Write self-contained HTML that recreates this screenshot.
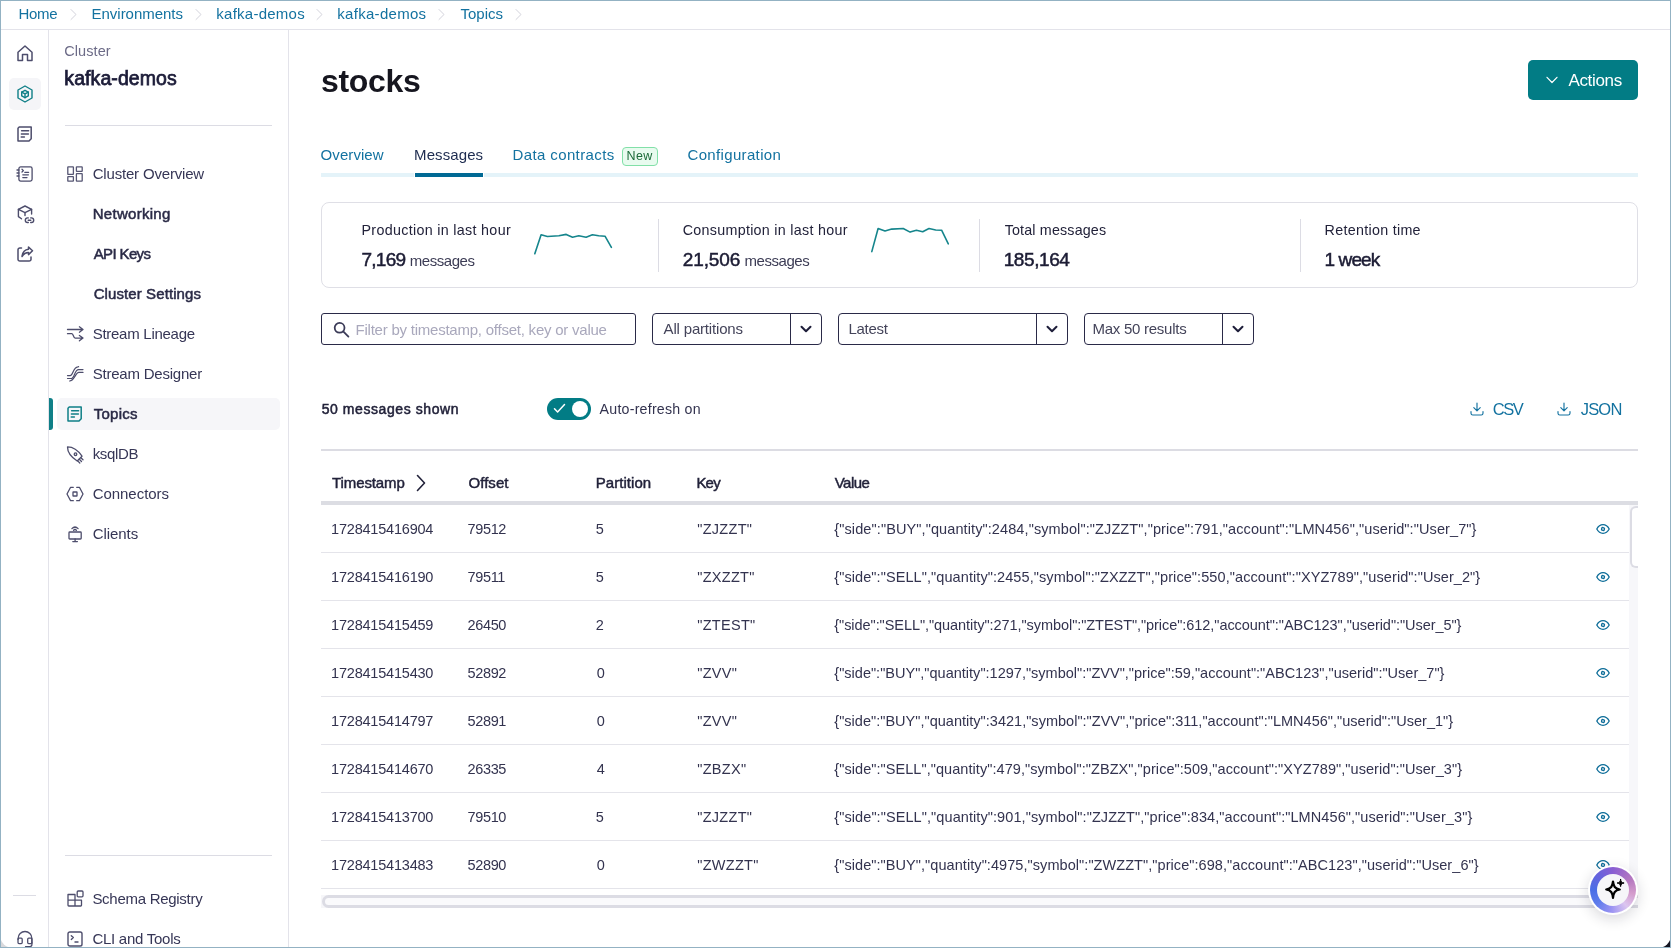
<!DOCTYPE html>
<html><head><meta charset="utf-8">
<style>
html,body{margin:0;padding:0;background:#fff;}
body{width:1671px;height:948px;position:relative;overflow:hidden;font-family:"Liberation Sans",sans-serif;}
.t{position:absolute;white-space:pre;font-family:"Liberation Sans",sans-serif;}
#txt{position:absolute;left:0;top:0;width:1671px;height:948px;will-change:transform;}
.a{position:absolute;}
svg.i{position:absolute;overflow:visible;fill:none;stroke-linecap:round;stroke-linejoin:round;}
.frame{position:absolute;left:0;top:0;width:1671px;height:948px;box-sizing:border-box;border:1px solid #93b2c3;z-index:50;pointer-events:none;}
</style></head>
<body>
<!-- corners outside -->
<div class="a" style="left:1650px;top:927px;width:21px;height:21px;background:#141421;"></div>
<div class="a" style="left:0;top:927px;width:21px;height:21px;background:#d9d9dc;"></div>
<div class="a" style="left:0;top:0;width:1671px;height:948px;background:#fff;border-radius:0 0 13px 13px;"></div>

<!-- breadcrumb bar bottom border -->
<div class="a" style="left:0;top:29px;width:1671px;height:1px;background:#e3e3ea;"></div>
<!-- rail border -->
<div class="a" style="left:48px;top:30px;width:1px;height:918px;background:#e3e3ea;"></div>
<!-- sidebar border -->
<div class="a" style="left:288px;top:30px;width:1px;height:918px;background:#e3e3ea;"></div>

<!-- breadcrumb chevrons -->
<svg class="i" style="left:69px;top:8px" width="10" height="13" viewBox="0 0 10 13"><path d="M2 1.5 L7 6.5 L2 11.5" stroke="#d3d3dc" stroke-width="1"/></svg>
<svg class="i" style="left:194px;top:8px" width="10" height="13" viewBox="0 0 10 13"><path d="M2 1.5 L7 6.5 L2 11.5" stroke="#d3d3dc" stroke-width="1"/></svg>
<svg class="i" style="left:315px;top:8px" width="10" height="13" viewBox="0 0 10 13"><path d="M2 1.5 L7 6.5 L2 11.5" stroke="#d3d3dc" stroke-width="1"/></svg>
<svg class="i" style="left:437px;top:8px" width="10" height="13" viewBox="0 0 10 13"><path d="M2 1.5 L7 6.5 L2 11.5" stroke="#d3d3dc" stroke-width="1"/></svg>
<svg class="i" style="left:514px;top:8px" width="10" height="13" viewBox="0 0 10 13"><path d="M2 1.5 L7 6.5 L2 11.5" stroke="#d3d3dc" stroke-width="1"/></svg>

<!-- ===== icon rail ===== -->
<!-- home -->
<svg class="i" style="left:17px;top:45px" width="16" height="17" viewBox="0 0 16 17" stroke="#4d4d6c" stroke-width="1.5">
<path d="M1 7.2 L8 1 L15 7.2 V15.5 H10.5 V9.6 H5.5 V15.5 H1 Z"/></svg>
<!-- active cluster box -->
<div class="a" style="left:9px;top:78px;width:32px;height:32px;border-radius:5px;background:#f5f5f8;"></div>
<svg class="i" style="left:16px;top:85px" width="18" height="18" viewBox="0 0 18 18" stroke="#0f7f87" stroke-width="1.4">
<path d="M9 1 L16 5 V13 L9 17 L2 13 V5 Z"/>
<path d="M9 5.3 L12.3 7.1 V10.9 L9 12.7 L5.7 10.9 V7.1 Z"/>
<path d="M5.7 7.1 L9 8.9 L12.3 7.1 M9 8.9 V12.7"/></svg>
<!-- doc -->
<svg class="i" style="left:17px;top:126px" width="16" height="16" viewBox="0 0 16 16" stroke="#4d4d6c" stroke-width="1.5">
<path d="M2.2 1 H14.2 V12.8 L12 15 H1 V2.2 Z"/>
<path d="M4.6 4.8 H11.6 M4.4 8 H11.4 M4.2 11 H7.4"/></svg>
<!-- notebook -->
<svg class="i" style="left:16px;top:166px" width="17" height="16" viewBox="0 0 17 16" stroke="#4d4d6c" stroke-width="1.3">
<rect x="2.9" y="0.9" width="13.2" height="14.2" rx="1.8"/>
<path d="M1 4 H2.9 M1 7 H2.9 M1 10 H2.9"/>
<path d="M6 3.2 L7.4 4.6 L6 6 M8.8 6.3 H12.6 M6.8 8.8 H12.4 M6.8 11.6 H11"/></svg>
<!-- cube link -->
<svg class="i" style="left:17px;top:205px" width="18" height="18" viewBox="0 0 18 18" stroke="#4d4d6c" stroke-width="1.4">
<path d="M8 1 L14.6 4.3 L8 7.6 L1.4 4.3 Z"/>
<path d="M1.4 4.3 V11.6 L4.5 13.8 M14.6 4.3 V9 M8 7.6 V10.6"/>
<path d="M11.3 12.9 H10.6 A2.3 2.3 0 0 0 10.6 17.5 H11.3 M13.7 12.9 H14.4 A2.3 2.3 0 0 1 14.4 17.5 H13.7 M11.2 15.2 H13.8"/></svg>
<!-- share -->
<svg class="i" style="left:17px;top:246px" width="17" height="16" viewBox="0 0 17 16" stroke="#4d4d6c" stroke-width="1.5">
<path d="M4.5 2 H2.8 A1.8 1.8 0 0 0 1 3.8 V13.2 A1.8 1.8 0 0 0 2.8 15 H12.2 A1.8 1.8 0 0 0 14 13.2 V11"/>
<path d="M11.5 1 L15.5 4.8 L11.5 8.6 V6.6 C8.5 6.6 6.5 8 5 10.5 C5.5 6.5 8 3.5 11.5 3.2 Z"/></svg>
<!-- rail bottom divider -->
<div class="a" style="left:13px;top:895px;width:23px;height:1px;background:#dcdce4;"></div>
<!-- headset -->
<svg class="i" style="left:17px;top:931px" width="16" height="18" viewBox="0 0 16 18" stroke="#4d4d6c" stroke-width="1.3">
<path d="M1.1 8.5 V7.4 A6.9 6.9 0 0 1 14.9 7.4 V12"/>
<rect x="1" y="7.2" width="4.2" height="5.4" rx="1"/>
<rect x="10.7" y="7.2" width="4.2" height="5.4" rx="1"/>
<path d="M14.9 12 V13.6 A2 2 0 0 1 12.9 15.6 H8.5"/></svg>
<!-- ===== sidebar ===== -->
<div class="a" style="left:65px;top:125px;width:207px;height:1px;background:#dcdce4;"></div>
<div class="a" style="left:65px;top:855px;width:207px;height:1px;background:#dcdce4;"></div>
<!-- topics active -->
<div class="a" style="left:57px;top:398px;width:223px;height:32px;border-radius:5px;background:#f6f6f9;"></div>
<div class="a" style="left:49px;top:398px;width:4px;height:32px;border-radius:0 3px 3px 0;background:#0f7f87;"></div>

<!-- cluster overview grid -->
<svg class="i" style="left:67px;top:166px" width="16" height="16" viewBox="0 0 16 16" stroke="#565673" stroke-width="1.3">
<rect x="0.8" y="0.8" width="5.6" height="7.6" rx="0.4"/>
<rect x="9.4" y="0.8" width="5.8" height="4.6" rx="0.4"/>
<rect x="0.8" y="10.6" width="5.6" height="4.6" rx="0.4"/>
<rect x="9.4" y="7.6" width="5.8" height="7.6" rx="0.4"/></svg>
<!-- stream lineage -->
<svg class="i" style="left:67px;top:326px" width="17" height="16" viewBox="0 0 17 16" stroke="#4d4d6c" stroke-width="1.3">
<path d="M0.5 3.5 H15.8 M12.4 0.8 L16 3.5 L12.4 6.2"/>
<path d="M0.5 7.7 H4.8 C6.6 7.7 6.2 12.1 8.2 12.1 H15.8 M12.4 9.4 L16 12.1 L12.4 14.8"/></svg>
<!-- stream designer -->
<svg class="i" style="left:67px;top:366px" width="17" height="16" viewBox="0 0 17 16" stroke="#4d4d6c" stroke-width="1.2">
<path d="M0.5 9.6 H3.2 C6.2 9.6 6 1.2 10.8 0.8 L11.6 0.7"/>
<path d="M0.5 12.5 H4.2 C7.6 12.5 7.4 3.6 11.6 3.6 H16"/>
<path d="M2.6 15 C7.2 15 8.6 6.4 11.8 6.4 H16"/></svg>
<!-- topics teal doc -->
<svg class="i" style="left:67px;top:406px" width="16" height="16" viewBox="0 0 16 16" stroke="#0f7f87" stroke-width="1.5">
<path d="M2.2 1 H14.2 V12.8 L12 15 H1 V2.2 Z"/>
<path d="M4.6 4.8 H11.6 M4.4 8 H11.4 M4.2 11 H7.4"/></svg>
<!-- ksqlDB rocket -->
<svg class="i" style="left:66px;top:446px" width="18" height="17" viewBox="0 0 18 17" stroke="#4d4d6c" stroke-width="1.3">
<path d="M1.5 0.9 C6.5 0.9 11.5 3.5 16 10.2 L11.2 15 C4.5 10.5 1.5 6 1.5 0.9 Z"/>
<circle cx="9.5" cy="8.2" r="1.3"/>
<path d="M13.3 13.3 L15.5 15.5 M14.9 11.7 L17 13.8 M11.7 14.9 L13.8 17"/></svg>
<!-- connectors -->
<svg class="i" style="left:66px;top:486px" width="18" height="16" viewBox="0 0 18 16" stroke="#4d4d6c" stroke-width="1.3" stroke-linejoin="miter">
<path d="M7.3 1.3 H4.6 L1 8 L4.6 14.7 H7.3 M10.7 1.3 H13.4 L17 8 L13.4 14.7 H10.7"/>
<rect x="7" y="6" width="4" height="4" rx="0.3"/></svg>
<!-- clients -->
<svg class="i" style="left:67px;top:526px" width="16" height="17" viewBox="0 0 16 17" stroke="#4d4d6c" stroke-width="1.3">
<path d="M4.9 2.6 C6.7 0.8 9.3 0.8 11.1 2.6 M6.6 4.2 C7.4 3.4 8.6 3.4 9.4 4.2"/>
<rect x="2" y="6" width="12.2" height="7" rx="0.8"/>
<path d="M8.1 13 V15.4 M5.8 15.6 H10.4"/></svg>
<!-- schema registry -->
<svg class="i" style="left:67px;top:890px" width="17" height="17" viewBox="0 0 17 17" stroke="#4d4d6c" stroke-width="1.3">
<path d="M1 4.5 H8 V16 H1.8 A0.8 0.8 0 0 1 1 15.2 Z M1 10.2 H14.5 V15.2 A0.8 0.8 0 0 1 13.7 16 H8"/>
<rect x="10.2" y="1" width="5.8" height="5.8" rx="1"/></svg>
<!-- CLI -->
<svg class="i" style="left:67px;top:931px" width="16" height="16" viewBox="0 0 16 16" stroke="#4d4d6c" stroke-width="1.4">
<rect x="1" y="1" width="14" height="14" rx="1.8"/>
<path d="M4.3 4.8 L6.3 6.6 L4.3 8.4 M8 11 H11"/></svg>

<!-- ===== main header ===== -->
<div class="a" style="left:1528px;top:60px;width:110px;height:40px;border-radius:5px;background:#027c85;"></div>
<svg class="i" style="left:1546px;top:76px" width="12" height="8" viewBox="0 0 12 8" stroke="#ffffff" stroke-width="1.2"><path d="M1 1.3 L6 6.5 L11 1.3"/></svg>

<!-- tabs -->
<div class="a" style="left:321px;top:173px;width:1317px;height:4px;background:#e4f3f9;"></div>
<div class="a" style="left:414px;top:173px;width:70px;height:4px;background:#fff;"></div>
<div class="a" style="left:415px;top:173px;width:68px;height:4px;background:#006994;"></div>
<div class="a" style="left:622px;top:147px;width:34px;height:17px;border:1px solid #82e0a8;border-radius:4px;background:#e8fbef;"></div>

<!-- stats card -->
<div class="a" style="left:321px;top:202px;width:1315px;height:84px;border:1px solid #dfdfe6;border-radius:8px;"></div>
<div class="a" style="left:658px;top:219px;width:1px;height:53px;background:#dcdce4;"></div>
<div class="a" style="left:979px;top:219px;width:1px;height:53px;background:#dcdce4;"></div>
<div class="a" style="left:1300px;top:219px;width:1px;height:53px;background:#dcdce4;"></div>
<svg class="i" style="left:0;top:0" width="1671" height="300" viewBox="0 0 1671 300" stroke="#15858c" stroke-width="1.6" stroke-linejoin="miter" stroke-linecap="butt">
<polyline points="534.8,253.7 541.1,234.8 547.4,236.5 558.9,235.8 566.2,234.4 572.5,237.3 578.8,235.8 586.1,237.3 592.4,234.8 598.7,235.8 605,236.2 611.4,247.4"/>
<polyline points="871.8,251.6 878.1,228.5 885,231 891.7,229.1 903.2,228.5 910.1,232.1 916.4,230.2 922.7,231.7 929,228.5 935.7,230 941.6,230.2 948.3,243.8"/>
</svg>

<!-- filters -->
<div class="a" style="left:321px;top:313px;width:313px;height:30px;border:1px solid #2a2a48;border-radius:3px;"></div>
<svg class="i" style="left:333px;top:321px" width="17" height="17" viewBox="0 0 17 17" stroke="#3b3b58" stroke-width="1.8">
<circle cx="6.6" cy="6.8" r="4.9"/><path d="M10.2 10.4 L15.4 15.6"/></svg>
<div class="a" style="left:652px;top:313px;width:168px;height:30px;border:1px solid #2a2a48;border-radius:4px;"></div>
<div class="a" style="left:790px;top:314px;width:1px;height:30px;background:#2a2a48;"></div>
<div class="a" style="left:838px;top:313px;width:228px;height:30px;border:1px solid #2a2a48;border-radius:4px;"></div>
<div class="a" style="left:1036px;top:314px;width:1px;height:30px;background:#2a2a48;"></div>
<div class="a" style="left:1084px;top:313px;width:168px;height:30px;border:1px solid #2a2a48;border-radius:4px;"></div>
<div class="a" style="left:1222px;top:314px;width:1px;height:30px;background:#2a2a48;"></div>
<svg class="i" style="left:800px;top:325px" width="12" height="9" viewBox="0 0 12 9" stroke="#1e1e3a" stroke-width="2"><path d="M1.5 1.8 L6 6.3 L10.5 1.8"/></svg>
<svg class="i" style="left:1046px;top:325px" width="12" height="9" viewBox="0 0 12 9" stroke="#1e1e3a" stroke-width="2"><path d="M1.5 1.8 L6 6.3 L10.5 1.8"/></svg>
<svg class="i" style="left:1232px;top:325px" width="12" height="9" viewBox="0 0 12 9" stroke="#1e1e3a" stroke-width="2"><path d="M1.5 1.8 L6 6.3 L10.5 1.8"/></svg>

<!-- toggle -->
<div class="a" style="left:547px;top:398px;width:44px;height:22px;border-radius:11px;background:#027c85;"></div>
<div class="a" style="left:572px;top:401px;width:16px;height:16px;border-radius:8px;background:#fff;"></div>
<svg class="i" style="left:553px;top:403px" width="13" height="11" viewBox="0 0 13 11" stroke="#ffffff" stroke-width="1.5"><path d="M1.5 5.8 L4.6 9 L11.5 1.5"/></svg>

<!-- download icons -->
<svg class="i" style="left:1470px;top:402px" width="14" height="14" viewBox="0 0 14 14" stroke="#1372a0" stroke-width="1.15">
<path d="M7 1 V8.6 M3.8 5.6 L7 8.8 L10.2 5.6 M1 9.5 V11.2 A1.8 1.8 0 0 0 2.8 13 H11.2 A1.8 1.8 0 0 0 13 11.2 V9.5"/></svg>
<svg class="i" style="left:1557px;top:402px" width="14" height="14" viewBox="0 0 14 14" stroke="#1372a0" stroke-width="1.15">
<path d="M7 1 V8.6 M3.8 5.6 L7 8.8 L10.2 5.6 M1 9.5 V11.2 A1.8 1.8 0 0 0 2.8 13 H11.2 A1.8 1.8 0 0 0 13 11.2 V9.5"/></svg>

<!-- table -->
<div class="a" style="left:321px;top:449px;width:1317px;height:2px;background:#dcdce3;"></div>
<svg class="i" style="left:415px;top:474px" width="12" height="18" viewBox="0 0 12 18" stroke="#22223a" stroke-width="1.6"><path d="M2.5 1.5 L9.5 9 L2.5 16.5"/></svg>
<div class="a" style="left:321px;top:501px;width:1317px;height:4px;background:#dcdde3;"></div>
<!-- vertical scrollbar track -->
<div class="a" style="left:1629px;top:505px;width:9px;height:384px;background:#f7f7fa;"></div>
<div class="a" style="left:1630px;top:506px;width:8px;height:62px;box-sizing:border-box;border:2px solid #dcdce4;border-right:none;border-radius:6px 0 0 6px;background:#fff;"></div>
<div class="a" style="left:321px;top:552px;width:1308px;height:1px;background:#e4e4ea;"></div>
<svg class="i" style="left:1596px;top:524px" width="14" height="10" viewBox="0 0 14 10" stroke="#0c6c98" stroke-width="1.3"><path d="M0.8 5 C2.6 1.6 4.8 0.7 7 0.7 C9.2 0.7 11.4 1.6 13.2 5 C11.4 8.4 9.2 9.3 7 9.3 C4.8 9.3 2.6 8.4 0.8 5 Z"/><rect x="5.6" y="3.6" width="2.8" height="2.8" rx="0.9" transform="rotate(15 7 5)"/></svg>
<div class="a" style="left:321px;top:600px;width:1308px;height:1px;background:#e4e4ea;"></div>
<svg class="i" style="left:1596px;top:572px" width="14" height="10" viewBox="0 0 14 10" stroke="#0c6c98" stroke-width="1.3"><path d="M0.8 5 C2.6 1.6 4.8 0.7 7 0.7 C9.2 0.7 11.4 1.6 13.2 5 C11.4 8.4 9.2 9.3 7 9.3 C4.8 9.3 2.6 8.4 0.8 5 Z"/><rect x="5.6" y="3.6" width="2.8" height="2.8" rx="0.9" transform="rotate(15 7 5)"/></svg>
<div class="a" style="left:321px;top:648px;width:1308px;height:1px;background:#e4e4ea;"></div>
<svg class="i" style="left:1596px;top:620px" width="14" height="10" viewBox="0 0 14 10" stroke="#0c6c98" stroke-width="1.3"><path d="M0.8 5 C2.6 1.6 4.8 0.7 7 0.7 C9.2 0.7 11.4 1.6 13.2 5 C11.4 8.4 9.2 9.3 7 9.3 C4.8 9.3 2.6 8.4 0.8 5 Z"/><rect x="5.6" y="3.6" width="2.8" height="2.8" rx="0.9" transform="rotate(15 7 5)"/></svg>
<div class="a" style="left:321px;top:696px;width:1308px;height:1px;background:#e4e4ea;"></div>
<svg class="i" style="left:1596px;top:668px" width="14" height="10" viewBox="0 0 14 10" stroke="#0c6c98" stroke-width="1.3"><path d="M0.8 5 C2.6 1.6 4.8 0.7 7 0.7 C9.2 0.7 11.4 1.6 13.2 5 C11.4 8.4 9.2 9.3 7 9.3 C4.8 9.3 2.6 8.4 0.8 5 Z"/><rect x="5.6" y="3.6" width="2.8" height="2.8" rx="0.9" transform="rotate(15 7 5)"/></svg>
<div class="a" style="left:321px;top:744px;width:1308px;height:1px;background:#e4e4ea;"></div>
<svg class="i" style="left:1596px;top:716px" width="14" height="10" viewBox="0 0 14 10" stroke="#0c6c98" stroke-width="1.3"><path d="M0.8 5 C2.6 1.6 4.8 0.7 7 0.7 C9.2 0.7 11.4 1.6 13.2 5 C11.4 8.4 9.2 9.3 7 9.3 C4.8 9.3 2.6 8.4 0.8 5 Z"/><rect x="5.6" y="3.6" width="2.8" height="2.8" rx="0.9" transform="rotate(15 7 5)"/></svg>
<div class="a" style="left:321px;top:792px;width:1308px;height:1px;background:#e4e4ea;"></div>
<svg class="i" style="left:1596px;top:764px" width="14" height="10" viewBox="0 0 14 10" stroke="#0c6c98" stroke-width="1.3"><path d="M0.8 5 C2.6 1.6 4.8 0.7 7 0.7 C9.2 0.7 11.4 1.6 13.2 5 C11.4 8.4 9.2 9.3 7 9.3 C4.8 9.3 2.6 8.4 0.8 5 Z"/><rect x="5.6" y="3.6" width="2.8" height="2.8" rx="0.9" transform="rotate(15 7 5)"/></svg>
<div class="a" style="left:321px;top:840px;width:1308px;height:1px;background:#e4e4ea;"></div>
<svg class="i" style="left:1596px;top:812px" width="14" height="10" viewBox="0 0 14 10" stroke="#0c6c98" stroke-width="1.3"><path d="M0.8 5 C2.6 1.6 4.8 0.7 7 0.7 C9.2 0.7 11.4 1.6 13.2 5 C11.4 8.4 9.2 9.3 7 9.3 C4.8 9.3 2.6 8.4 0.8 5 Z"/><rect x="5.6" y="3.6" width="2.8" height="2.8" rx="0.9" transform="rotate(15 7 5)"/></svg>
<div class="a" style="left:321px;top:888px;width:1308px;height:1px;background:#e4e4ea;"></div>
<svg class="i" style="left:1596px;top:860px" width="14" height="10" viewBox="0 0 14 10" stroke="#0c6c98" stroke-width="1.3"><path d="M0.8 5 C2.6 1.6 4.8 0.7 7 0.7 C9.2 0.7 11.4 1.6 13.2 5 C11.4 8.4 9.2 9.3 7 9.3 C4.8 9.3 2.6 8.4 0.8 5 Z"/><rect x="5.6" y="3.6" width="2.8" height="2.8" rx="0.9" transform="rotate(15 7 5)"/></svg>

<!-- horizontal scrollbar -->
<div class="a" style="left:321px;top:895px;width:1317px;height:13px;background:#f6f6f9;"></div>
<div class="a" style="left:322px;top:895px;width:1316px;height:13px;box-sizing:border-box;border:3px solid #dcdce4;border-radius:7px 0 0 7px;border-right:none;background:#fafafc;"></div>

<div id="txt">
<div class="t" style="left:18.60px;top:5px;font-size:15px;line-height:18px;font-weight:400;color:#1372a0;letter-spacing:-0.367px;">Home</div>
<div class="t" style="left:91.60px;top:5px;font-size:15px;line-height:18px;font-weight:400;color:#1372a0;letter-spacing:-0.036px;">Environments</div>
<div class="t" style="left:216.30px;top:5px;font-size:15px;line-height:18px;font-weight:400;color:#1372a0;letter-spacing:0.250px;">kafka-demos</div>
<div class="t" style="left:337.30px;top:5px;font-size:15px;line-height:18px;font-weight:400;color:#1372a0;letter-spacing:0.290px;">kafka-demos</div>
<div class="t" style="left:460.40px;top:5px;font-size:15px;line-height:18px;font-weight:400;color:#1372a0;letter-spacing:0.020px;">Topics</div>
<div class="t" style="left:64.30px;top:43px;font-size:14.5px;line-height:17px;font-weight:400;color:#6c6b87;letter-spacing:0.067px;">Cluster</div>
<div class="t" style="left:64.30px;top:67px;font-size:19.5px;line-height:23px;font-weight:400;-webkit-text-stroke:0.75px currentColor;color:#1c1c38;letter-spacing:0.080px;">kafka-demos</div>
<div class="t" style="left:92.70px;top:165px;font-size:15px;line-height:18px;font-weight:400;color:#363656;letter-spacing:-0.180px;">Cluster Overview</div>
<div class="t" style="left:92.70px;top:205px;font-size:15px;line-height:18px;font-weight:400;-webkit-text-stroke:0.5px currentColor;color:#2a2a46;letter-spacing:0.289px;">Networking</div>
<div class="t" style="left:93.70px;top:245px;font-size:15px;line-height:18px;font-weight:400;-webkit-text-stroke:0.5px currentColor;color:#2a2a46;letter-spacing:-0.629px;">API Keys</div>
<div class="t" style="left:93.70px;top:285px;font-size:15px;line-height:18px;font-weight:400;-webkit-text-stroke:0.5px currentColor;color:#2a2a46;letter-spacing:0.093px;">Cluster Settings</div>
<div class="t" style="left:92.70px;top:325px;font-size:15px;line-height:18px;font-weight:400;color:#363656;letter-spacing:-0.269px;">Stream Lineage</div>
<div class="t" style="left:92.70px;top:365px;font-size:15px;line-height:18px;font-weight:400;color:#363656;letter-spacing:-0.221px;">Stream Designer</div>
<div class="t" style="left:93.70px;top:405px;font-size:15px;line-height:18px;font-weight:400;-webkit-text-stroke:0.5px currentColor;color:#2a2a46;letter-spacing:0.260px;">Topics</div>
<div class="t" style="left:92.70px;top:445px;font-size:15px;line-height:18px;font-weight:400;color:#363656;letter-spacing:-0.340px;">ksqlDB</div>
<div class="t" style="left:92.70px;top:485px;font-size:15px;line-height:18px;font-weight:400;color:#363656;letter-spacing:-0.044px;">Connectors</div>
<div class="t" style="left:92.70px;top:525px;font-size:15px;line-height:18px;font-weight:400;color:#363656;letter-spacing:-0.050px;">Clients</div>
<div class="t" style="left:92.40px;top:890px;font-size:15px;line-height:18px;font-weight:400;color:#363656;letter-spacing:-0.279px;">Schema Registry</div>
<div class="t" style="left:92.40px;top:930px;font-size:15px;line-height:18px;font-weight:400;color:#363656;letter-spacing:-0.258px;">CLI and Tools</div>
<div class="t" style="left:320.90px;top:62px;font-size:32px;line-height:38px;font-weight:700;color:#16161f;letter-spacing:-0.300px;">stocks</div>
<div class="t" style="left:320.60px;top:146px;font-size:15px;line-height:18px;font-weight:400;color:#1372a0;letter-spacing:0.071px;">Overview</div>
<div class="t" style="left:414.10px;top:146px;font-size:15px;line-height:18px;font-weight:400;color:#1d2b4f;letter-spacing:0.086px;">Messages</div>
<div class="t" style="left:512.50px;top:146px;font-size:15px;line-height:18px;font-weight:400;color:#1372a0;letter-spacing:0.385px;">Data contracts</div>
<div class="t" style="left:626.50px;top:149px;font-size:12.5px;line-height:15px;font-weight:400;color:#1b6a38;letter-spacing:0.350px;">New</div>
<div class="t" style="left:687.50px;top:146px;font-size:15px;line-height:18px;font-weight:400;color:#1372a0;letter-spacing:0.342px;">Configuration</div>
<div class="t" style="left:1568.40px;top:71px;font-size:17px;line-height:20px;font-weight:400;color:#ffffff;letter-spacing:-0.333px;">Actions</div>
<div class="t" style="left:361.50px;top:222px;font-size:14.3px;line-height:17px;font-weight:400;color:#22223a;letter-spacing:0.314px;">Production in last hour</div>
<div class="t" style="left:361.50px;top:248px;font-size:19px;line-height:23px;font-weight:400;-webkit-text-stroke:0.5px currentColor;color:#1c1c34;letter-spacing:-0.750px;">7,169</div>
<div class="t" style="left:409.70px;top:252px;font-size:15px;line-height:18px;font-weight:400;color:#3c3c55;letter-spacing:-0.443px;">messages</div>
<div class="t" style="left:682.70px;top:222px;font-size:14.3px;line-height:17px;font-weight:400;color:#22223a;letter-spacing:0.287px;">Consumption in last hour</div>
<div class="t" style="left:682.70px;top:248px;font-size:19px;line-height:23px;font-weight:400;-webkit-text-stroke:0.5px currentColor;color:#1c1c34;letter-spacing:-0.080px;">21,506</div>
<div class="t" style="left:744.50px;top:252px;font-size:15px;line-height:18px;font-weight:400;color:#3c3c55;letter-spacing:-0.443px;">messages</div>
<div class="t" style="left:1004.70px;top:222px;font-size:14.3px;line-height:17px;font-weight:400;color:#22223a;letter-spacing:0.162px;">Total messages</div>
<div class="t" style="left:1003.70px;top:248px;font-size:19px;line-height:23px;font-weight:400;-webkit-text-stroke:0.5px currentColor;color:#1c1c34;letter-spacing:-0.417px;">185,164</div>
<div class="t" style="left:1324.60px;top:222px;font-size:14.3px;line-height:17px;font-weight:400;color:#22223a;letter-spacing:0.292px;">Retention time</div>
<div class="t" style="left:1324.60px;top:248px;font-size:19px;line-height:23px;font-weight:400;-webkit-text-stroke:0.5px currentColor;color:#1c1c34;letter-spacing:-0.920px;">1 week</div>
<div class="t" style="left:355.50px;top:321px;font-size:15px;line-height:18px;font-weight:400;color:#a9a8bc;letter-spacing:-0.230px;">Filter by timestamp, offset, key or value</div>
<div class="t" style="left:663.60px;top:320px;font-size:15px;line-height:18px;font-weight:400;color:#44445a;letter-spacing:-0.177px;">All partitions</div>
<div class="t" style="left:848.50px;top:320px;font-size:15px;line-height:18px;font-weight:400;color:#44445a;letter-spacing:-0.300px;">Latest</div>
<div class="t" style="left:1092.50px;top:320px;font-size:15px;line-height:18px;font-weight:400;color:#44445a;letter-spacing:-0.262px;">Max 50 results</div>
<div class="t" style="left:321.70px;top:401px;font-size:14px;line-height:17px;font-weight:400;-webkit-text-stroke:0.5px currentColor;color:#22223a;letter-spacing:0.575px;">50 messages shown</div>
<div class="t" style="left:599.60px;top:401px;font-size:14.2px;line-height:17px;font-weight:400;color:#33334f;letter-spacing:0.229px;">Auto-refresh on</div>
<div class="t" style="left:1492.70px;top:399px;font-size:16.5px;line-height:20px;font-weight:400;color:#1372a0;letter-spacing:-1.450px;">CSV</div>
<div class="t" style="left:1580.70px;top:399px;font-size:16.5px;line-height:20px;font-weight:400;color:#1372a0;letter-spacing:-0.800px;">JSON</div>
<div class="t" style="left:332.10px;top:474px;font-size:15px;line-height:18px;font-weight:400;-webkit-text-stroke:0.45px currentColor;color:#22223a;letter-spacing:-0.113px;">Timestamp</div>
<div class="t" style="left:468.50px;top:474px;font-size:15px;line-height:18px;font-weight:400;-webkit-text-stroke:0.45px currentColor;color:#22223a;letter-spacing:0.040px;">Offset</div>
<div class="t" style="left:595.70px;top:474px;font-size:15px;line-height:18px;font-weight:400;-webkit-text-stroke:0.45px currentColor;color:#22223a;letter-spacing:0.062px;">Partition</div>
<div class="t" style="left:696.40px;top:474px;font-size:15px;line-height:18px;font-weight:400;-webkit-text-stroke:0.45px currentColor;color:#22223a;letter-spacing:-0.800px;">Key</div>
<div class="t" style="left:834.70px;top:474px;font-size:15px;line-height:18px;font-weight:400;-webkit-text-stroke:0.45px currentColor;color:#22223a;letter-spacing:-0.500px;">Value</div>
<div class="t" style="left:331.10px;top:521px;font-size:14.5px;line-height:17px;font-weight:400;color:#33334f;letter-spacing:-0.208px;">1728415416904</div>
<div class="t" style="left:467.50px;top:521px;font-size:14.5px;line-height:17px;font-weight:400;color:#33334f;letter-spacing:-0.350px;">79512</div>
<div class="t" style="left:595.70px;top:521px;font-size:14.5px;line-height:17px;font-weight:400;color:#33334f;letter-spacing:0.000px;">5</div>
<div class="t" style="left:697.20px;top:521px;font-size:14.5px;line-height:17px;font-weight:400;color:#33334f;letter-spacing:0.300px;">&quot;ZJZZT&quot;</div>
<div class="t" style="left:834.30px;top:521px;font-size:14.5px;line-height:17px;font-weight:400;color:#33334f;letter-spacing:0.102px;">{&quot;side&quot;:&quot;BUY&quot;,&quot;quantity&quot;:2484,&quot;symbol&quot;:&quot;ZJZZT&quot;,&quot;price&quot;:791,&quot;account&quot;:&quot;LMN456&quot;,&quot;userid&quot;:&quot;User_7&quot;}</div>
<div class="t" style="left:331.10px;top:569px;font-size:14.5px;line-height:17px;font-weight:400;color:#33334f;letter-spacing:-0.208px;">1728415416190</div>
<div class="t" style="left:467.50px;top:569px;font-size:14.5px;line-height:17px;font-weight:400;color:#33334f;letter-spacing:-0.350px;">79511</div>
<div class="t" style="left:595.70px;top:569px;font-size:14.5px;line-height:17px;font-weight:400;color:#33334f;letter-spacing:0.000px;">5</div>
<div class="t" style="left:697.20px;top:569px;font-size:14.5px;line-height:17px;font-weight:400;color:#33334f;letter-spacing:0.300px;">&quot;ZXZZT&quot;</div>
<div class="t" style="left:834.30px;top:569px;font-size:14.5px;line-height:17px;font-weight:400;color:#33334f;letter-spacing:0.081px;">{&quot;side&quot;:&quot;SELL&quot;,&quot;quantity&quot;:2455,&quot;symbol&quot;:&quot;ZXZZT&quot;,&quot;price&quot;:550,&quot;account&quot;:&quot;XYZ789&quot;,&quot;userid&quot;:&quot;User_2&quot;}</div>
<div class="t" style="left:331.10px;top:617px;font-size:14.5px;line-height:17px;font-weight:400;color:#33334f;letter-spacing:-0.208px;">1728415415459</div>
<div class="t" style="left:467.50px;top:617px;font-size:14.5px;line-height:17px;font-weight:400;color:#33334f;letter-spacing:-0.350px;">26450</div>
<div class="t" style="left:595.70px;top:617px;font-size:14.5px;line-height:17px;font-weight:400;color:#33334f;letter-spacing:0.000px;">2</div>
<div class="t" style="left:697.20px;top:617px;font-size:14.5px;line-height:17px;font-weight:400;color:#33334f;letter-spacing:0.300px;">&quot;ZTEST&quot;</div>
<div class="t" style="left:834.30px;top:617px;font-size:14.5px;line-height:17px;font-weight:400;color:#33334f;letter-spacing:-0.057px;">{&quot;side&quot;:&quot;SELL&quot;,&quot;quantity&quot;:271,&quot;symbol&quot;:&quot;ZTEST&quot;,&quot;price&quot;:612,&quot;account&quot;:&quot;ABC123&quot;,&quot;userid&quot;:&quot;User_5&quot;}</div>
<div class="t" style="left:331.10px;top:665px;font-size:14.5px;line-height:17px;font-weight:400;color:#33334f;letter-spacing:-0.208px;">1728415415430</div>
<div class="t" style="left:467.50px;top:665px;font-size:14.5px;line-height:17px;font-weight:400;color:#33334f;letter-spacing:-0.350px;">52892</div>
<div class="t" style="left:596.70px;top:665px;font-size:14.5px;line-height:17px;font-weight:400;color:#33334f;letter-spacing:0.000px;">0</div>
<div class="t" style="left:697.20px;top:665px;font-size:14.5px;line-height:17px;font-weight:400;color:#33334f;letter-spacing:0.300px;">&quot;ZVV&quot;</div>
<div class="t" style="left:834.30px;top:665px;font-size:14.5px;line-height:17px;font-weight:400;color:#33334f;letter-spacing:0.011px;">{&quot;side&quot;:&quot;BUY&quot;,&quot;quantity&quot;:1297,&quot;symbol&quot;:&quot;ZVV&quot;,&quot;price&quot;:59,&quot;account&quot;:&quot;ABC123&quot;,&quot;userid&quot;:&quot;User_7&quot;}</div>
<div class="t" style="left:331.10px;top:713px;font-size:14.5px;line-height:17px;font-weight:400;color:#33334f;letter-spacing:-0.208px;">1728415414797</div>
<div class="t" style="left:467.50px;top:713px;font-size:14.5px;line-height:17px;font-weight:400;color:#33334f;letter-spacing:-0.350px;">52891</div>
<div class="t" style="left:596.70px;top:713px;font-size:14.5px;line-height:17px;font-weight:400;color:#33334f;letter-spacing:0.000px;">0</div>
<div class="t" style="left:697.20px;top:713px;font-size:14.5px;line-height:17px;font-weight:400;color:#33334f;letter-spacing:0.300px;">&quot;ZVV&quot;</div>
<div class="t" style="left:834.30px;top:713px;font-size:14.5px;line-height:17px;font-weight:400;color:#33334f;letter-spacing:0.020px;">{&quot;side&quot;:&quot;BUY&quot;,&quot;quantity&quot;:3421,&quot;symbol&quot;:&quot;ZVV&quot;,&quot;price&quot;:311,&quot;account&quot;:&quot;LMN456&quot;,&quot;userid&quot;:&quot;User_1&quot;}</div>
<div class="t" style="left:331.10px;top:761px;font-size:14.5px;line-height:17px;font-weight:400;color:#33334f;letter-spacing:-0.208px;">1728415414670</div>
<div class="t" style="left:467.50px;top:761px;font-size:14.5px;line-height:17px;font-weight:400;color:#33334f;letter-spacing:-0.350px;">26335</div>
<div class="t" style="left:596.70px;top:761px;font-size:14.5px;line-height:17px;font-weight:400;color:#33334f;letter-spacing:0.000px;">4</div>
<div class="t" style="left:697.20px;top:761px;font-size:14.5px;line-height:17px;font-weight:400;color:#33334f;letter-spacing:0.300px;">&quot;ZBZX&quot;</div>
<div class="t" style="left:834.30px;top:761px;font-size:14.5px;line-height:17px;font-weight:400;color:#33334f;letter-spacing:0.061px;">{&quot;side&quot;:&quot;SELL&quot;,&quot;quantity&quot;:479,&quot;symbol&quot;:&quot;ZBZX&quot;,&quot;price&quot;:509,&quot;account&quot;:&quot;XYZ789&quot;,&quot;userid&quot;:&quot;User_3&quot;}</div>
<div class="t" style="left:331.10px;top:809px;font-size:14.5px;line-height:17px;font-weight:400;color:#33334f;letter-spacing:-0.208px;">1728415413700</div>
<div class="t" style="left:467.50px;top:809px;font-size:14.5px;line-height:17px;font-weight:400;color:#33334f;letter-spacing:-0.350px;">79510</div>
<div class="t" style="left:595.70px;top:809px;font-size:14.5px;line-height:17px;font-weight:400;color:#33334f;letter-spacing:0.000px;">5</div>
<div class="t" style="left:697.20px;top:809px;font-size:14.5px;line-height:17px;font-weight:400;color:#33334f;letter-spacing:0.300px;">&quot;ZJZZT&quot;</div>
<div class="t" style="left:834.30px;top:809px;font-size:14.5px;line-height:17px;font-weight:400;color:#33334f;letter-spacing:0.083px;">{&quot;side&quot;:&quot;SELL&quot;,&quot;quantity&quot;:901,&quot;symbol&quot;:&quot;ZJZZT&quot;,&quot;price&quot;:834,&quot;account&quot;:&quot;LMN456&quot;,&quot;userid&quot;:&quot;User_3&quot;}</div>
<div class="t" style="left:331.10px;top:857px;font-size:14.5px;line-height:17px;font-weight:400;color:#33334f;letter-spacing:-0.208px;">1728415413483</div>
<div class="t" style="left:467.50px;top:857px;font-size:14.5px;line-height:17px;font-weight:400;color:#33334f;letter-spacing:-0.350px;">52890</div>
<div class="t" style="left:596.70px;top:857px;font-size:14.5px;line-height:17px;font-weight:400;color:#33334f;letter-spacing:0.000px;">0</div>
<div class="t" style="left:697.20px;top:857px;font-size:14.5px;line-height:17px;font-weight:400;color:#33334f;letter-spacing:0.300px;">&quot;ZWZZT&quot;</div>
<div class="t" style="left:834.30px;top:857px;font-size:14.5px;line-height:17px;font-weight:400;color:#33334f;letter-spacing:0.065px;">{&quot;side&quot;:&quot;BUY&quot;,&quot;quantity&quot;:4975,&quot;symbol&quot;:&quot;ZWZZT&quot;,&quot;price&quot;:698,&quot;account&quot;:&quot;ABC123&quot;,&quot;userid&quot;:&quot;User_6&quot;}</div>

</div>

<!-- AI button -->
<div class="a" style="left:1588px;top:865px;width:50px;height:50px;border-radius:25px;background:#fff;box-shadow:0 4px 14px rgba(20,20,40,0.16);"></div>
<div class="a" style="left:1590px;top:867px;width:46px;height:46px;border-radius:23px;background:conic-gradient(from 0deg,#8a5ed2 0deg,#b578c0 60deg,#d49ccc 100deg,#dcc6f0 140deg,#9a92f2 185deg,#5e7cec 230deg,#4a6ee6 270deg,#6a62dc 320deg,#8a5ed2 360deg);"></div>
<div class="a" style="left:1597px;top:874px;width:32px;height:32px;border-radius:16px;background:#f6f6f9;"></div>
<svg class="i" style="left:1602px;top:877px" width="26" height="26" viewBox="0 0 26 26" fill="#000" stroke="#000" stroke-width="1.2">
<path d="M11 4.5 C11.6 9.5 12.8 11.6 17.8 12.5 C12.8 13.4 11.6 15.5 11 20.8 C10.4 15.5 9.2 13.4 4.2 12.5 C9.2 11.6 10.4 9.5 11 4.5 Z" fill="#f6f6f9" stroke-width="2.2"/>
<path d="M18.6 2.4 C18.9 4.9 19.6 5.6 22.1 6 C19.6 6.4 18.9 7.1 18.6 9.6 C18.3 7.1 17.6 6.4 15.1 6 C17.6 5.6 18.3 4.9 18.6 2.4 Z" fill="#000" stroke-width="1"/></svg>

<div class="frame"></div>
</body></html>
